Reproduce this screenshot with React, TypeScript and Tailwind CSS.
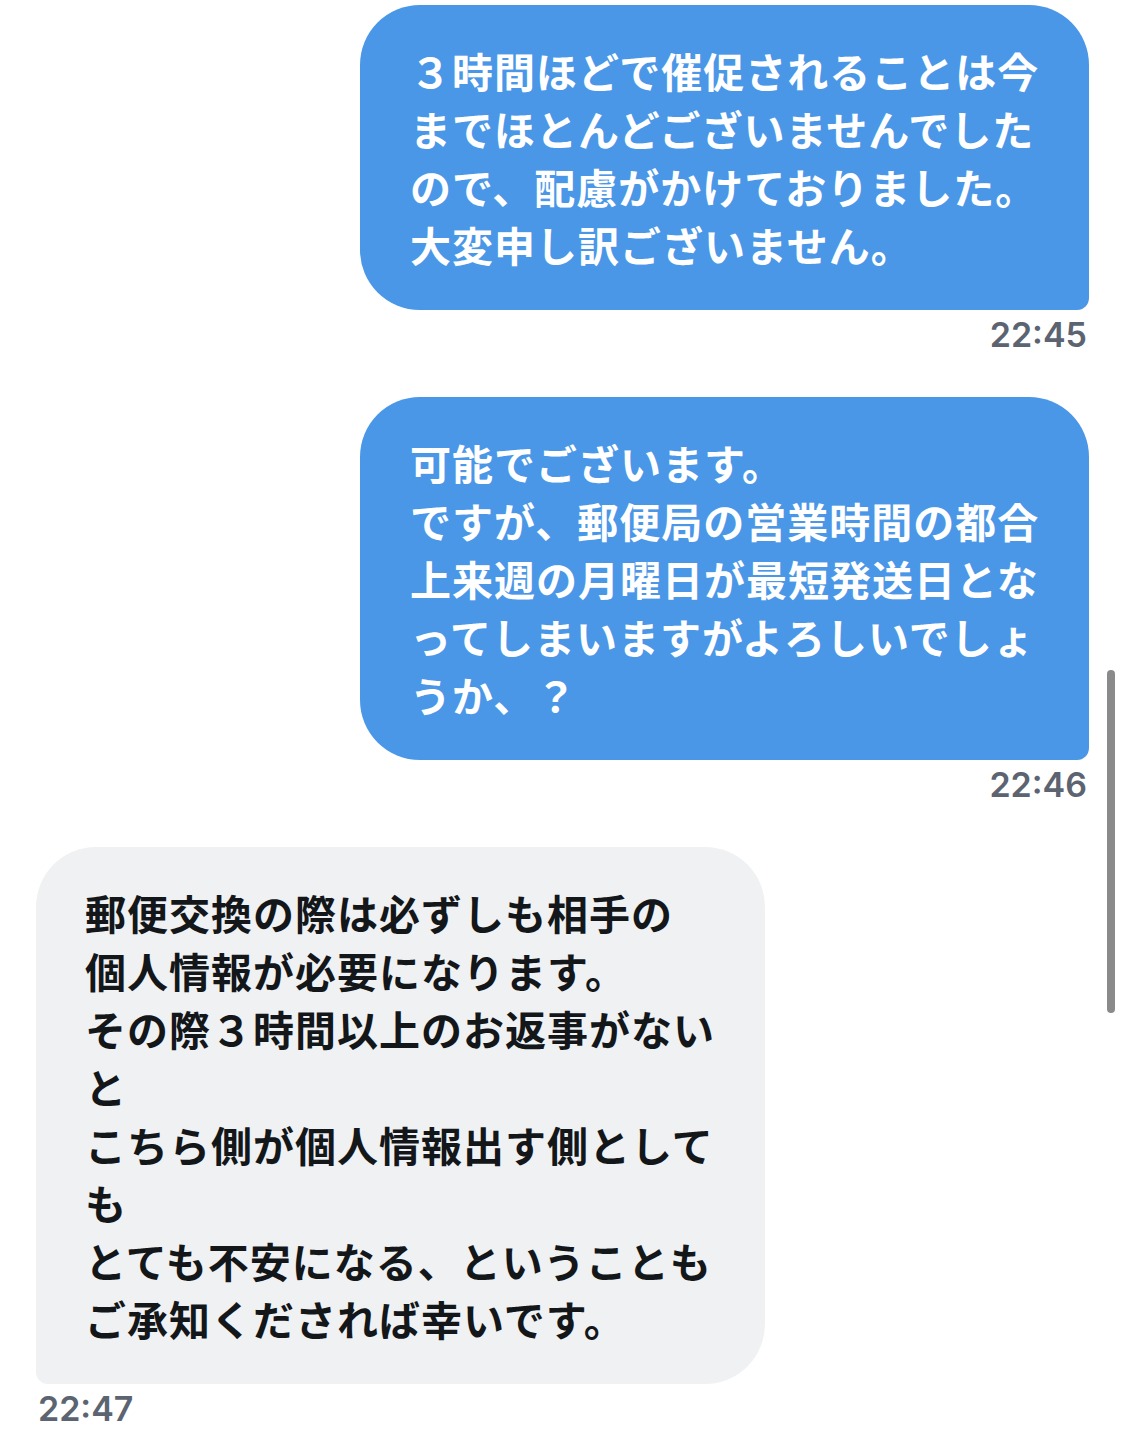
const jp = { fontFamily: '"Noto Sans CJK JP", "Noto Sans", sans-serif' };
const num = { fontFamily: 'Inter, "Liberation Sans", sans-serif' };

type Msg = { lines: string[]; time: string; mine: boolean };

const messages: Msg[] = [
  {
    mine: true,
    time: '22:45',
    lines: [
      '３時間ほどで催促されることは今',
      'までほとんどございませんでした',
      'ので、配慮がかけておりました。',
      '大変申し訳ございません。',
    ],
  },
  {
    mine: true,
    time: '22:46',
    lines: [
      '可能でございます。',
      'ですが、郵便局の営業時間の都合',
      '上来週の月曜日が最短発送日とな',
      'ってしまいますがよろしいでしょ',
      'うか、？',
    ],
  },
  {
    mine: false,
    time: '22:47',
    lines: [
      '郵便交換の際は必ずしも相手の',
      '個人情報が必要になります。',
      'その際３時間以上のお返事がない',
      'と',
      'こちら側が個人情報出す側として',
      'も',
      'とても不安になる、ということも',
      'ご承知くだされば幸いです。',
    ],
  },
];

function Bubble({ msg }: { msg: Msg }) {
  return (
    <div className={msg.mine ? 'flex flex-col items-end' : 'flex flex-col items-start'}>
      <div
        className={
          msg.mine
            ? 'w-[729px] bg-[#4a97e7] text-white rounded-[60px] rounded-br-[12px] pl-[50px] pr-[40px] pt-[36px] pb-[37px]'
            : 'w-[729px] bg-[#eff1f3] text-[#14171a] rounded-[60px] rounded-bl-[12px] pl-[49px] pr-[40px] pt-[36px] pb-[37px]'
        }
        style={jp}
      >
        {msg.lines.map((l, i) => (
          <div key={i} className="text-[41px] leading-[58px] font-bold tracking-[1px] whitespace-nowrap">
            {l}
          </div>
        ))}
      </div>
      <div
        className={
          msg.mine
            ? 'h-[46px] pt-[5px] pr-[2px] text-[34px] leading-[40px] font-semibold text-[#5b6470]'
            : 'h-[46px] pt-[5px] pl-[2px] text-[34px] leading-[40px] font-semibold text-[#5b6470]'
        }
        style={num}
      >
        {msg.time}
      </div>
    </div>
  );
}

export default function App() {
  return (
    <div className="relative w-[1125px] h-[1451px] bg-white overflow-hidden">
      <div className="flex flex-col gap-[41px] pt-[5px] px-[36px]">
        {messages.map((m, i) => (
          <Bubble key={i} msg={m} />
        ))}
      </div>
      {/* scroll indicator */}
      <div className="absolute left-[1107px] top-[670px] w-[8px] h-[343px] rounded-full bg-[#8a8a8a]" />
    </div>
  );
}
